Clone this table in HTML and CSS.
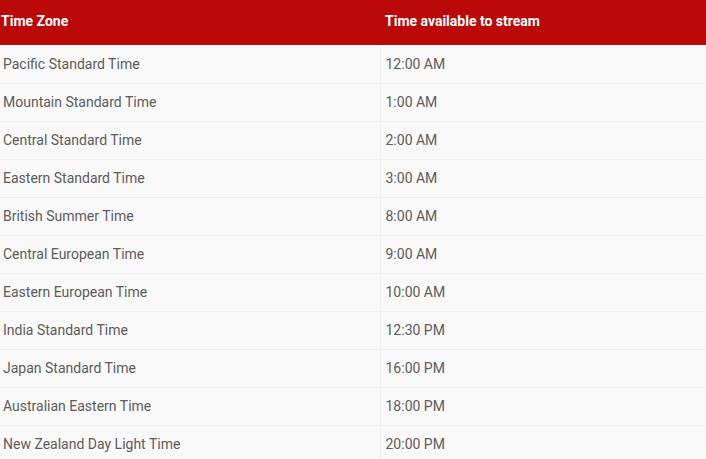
FILE: index.html
```html
<!DOCTYPE html>
<html>
<head>
<meta charset="utf-8">
<link rel="stylesheet" href="styles.css">
</head>
<body>
<table class="tz">
  <thead>
    <tr><th class="c1">Time Zone</th><th class="c2">Time available to stream</th></tr>
  </thead>
  <tbody>
    <tr><td class="c1">Pacific Standard Time</td><td class="c2">12:00 AM</td></tr>
    <tr><td class="c1">Mountain Standard Time</td><td class="c2">1:00 AM</td></tr>
    <tr><td class="c1">Central Standard Time</td><td class="c2">2:00 AM</td></tr>
    <tr><td class="c1">Eastern Standard Time</td><td class="c2">3:00 AM</td></tr>
    <tr><td class="c1">British Summer Time</td><td class="c2">8:00 AM</td></tr>
    <tr><td class="c1">Central European Time</td><td class="c2">9:00 AM</td></tr>
    <tr><td class="c1">Eastern European Time</td><td class="c2">10:00 AM</td></tr>
    <tr><td class="c1">India Standard Time</td><td class="c2">12:30 PM</td></tr>
    <tr><td class="c1">Japan Standard Time</td><td class="c2">16:00 PM</td></tr>
    <tr><td class="c1">Australian Eastern Time</td><td class="c2">18:00 PM</td></tr>
    <tr><td class="c1">New Zealand Day Light Time</td><td class="c2">20:00 PM</td></tr>
  </tbody>
</table>
</body>
</html>
```
FILE: styles.css
```css
html, body { margin: 0; padding: 0; background: #fff; }
.tz {
  width: 706px;
  border-collapse: collapse;
  table-layout: fixed;
  font-family: Roboto, "Liberation Sans", sans-serif;
  font-size: 14px;
}
.tz th {
  box-sizing: border-box;
  background: #bb0808;
  color: #fff;
  font-weight: 700;
  text-align: left;
  height: 45px;
  padding: 0 0 3px 0;
}
.tz td {
  box-sizing: border-box;
  background: #f9f9f9;
  color: #5c5c5c;
  height: 38px;
  padding: 0;
  border-bottom: 1px solid #efefef;
}
.tz .c1 { width: 380px; padding-left: 3px; }
.tz th.c1 { padding-left: 1px; }
.tz .c2 { padding-left: 5px; }
.tz td.c2 { border-left: 1px solid #efefef; }
.tz th.c2 { padding-left: 5px; }
```
